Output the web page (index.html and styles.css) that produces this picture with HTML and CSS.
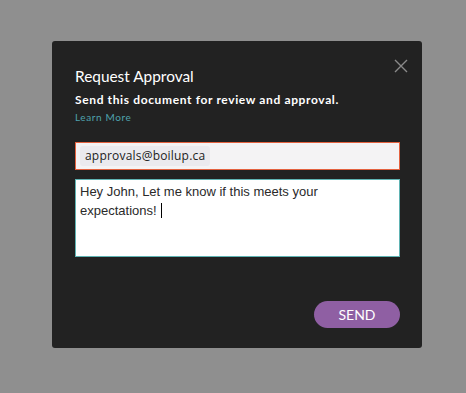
FILE: index.html
```html
<!DOCTYPE html>
<html>
<head>
<meta charset="utf-8">
<link rel="stylesheet" href="styles.css">
</head>
<body>
<div class="modal">
  <button class="close" aria-label="Close">
    <svg width="14" height="14" viewBox="0 0 14 14"><path d="M1 1L13 13M13 1L1 13" stroke="#8a8a8a" stroke-width="1.4" fill="none"/></svg>
  </button>
  <h1 class="title">Request Approval</h1>
  <p class="subtitle">Send this document for review and approval.</p>
  <a class="learn" href="#">Learn More</a>
  <div class="email-field"><span class="chip">approvals@boilup.ca</span></div>
  <div class="message">Hey John, Let me know if this meets your expectations!<span class="caret"></span></div>
  <div class="actions"><button class="send">SEND</button></div>
</div>
</body>
</html>
```
FILE: styles.css
```css
html, body { margin: 0; padding: 0; }
body {
  background: #8f8f8f;
  width: 466px;
  height: 393px;
  overflow: hidden;
  font-family: Lato, "Open Sans", sans-serif;
}
.modal {
  position: relative;
  box-sizing: border-box;
  margin: 41px 0 0 52px;
  width: 370px;
  height: 307px;
  background: #222222;
  border-radius: 3px;
  padding: 26px 22px 0 23px;
  display: flex;
  flex-direction: column;
}
.close {
  position: absolute;
  top: 18px;
  right: 14px;
  background: none;
  border: 0;
  padding: 0;
  width: 14px;
  height: 14px;
  display: flex;
}
.title {
  margin: 0;
  font-size: 15.4px;
  font-weight: 400;
  color: #ffffff;
  line-height: 19px;
}
.subtitle {
  margin: 6px 0 0;
  font-size: 12px;
  font-weight: 700;
  letter-spacing: 0.63px;
  color: #ffffff;
  line-height: 15px;
}
.learn {
  margin-top: 4px;
  font-size: 10px;
  letter-spacing: 0.6px;
  color: #4fa3ad;
  text-decoration: none;
  line-height: 13px;
  align-self: flex-start;
}
.email-field {
  margin-top: 18px;
  box-sizing: border-box;
  height: 28px;
  background: #f4f3f4;
  border: 1px solid #e4623f;
  display: flex;
  align-items: center;
  padding: 0 4px;
}
.chip {
  background: #ebeaee;
  border-radius: 3px;
  padding: 2px 5px;
  font-family: "Open Sans", sans-serif;
  font-size: 12px;
  letter-spacing: 0.2px;
  color: #222;
  line-height: 16px;
}
.message {
  margin-top: 9px;
  box-sizing: border-box;
  height: 78px;
  background: #ffffff;
  border: 1px solid #5fb3b3;
  padding: 2px 4px;
  font-family: "Liberation Sans", Arial, sans-serif;
  font-size: 13px;
  line-height: 19px;
  color: #2a2a2a;
  padding-right: 70px;
}
.caret {
  display: inline-block;
  width: 1px;
  height: 15px;
  background: #000;
  margin-left: 4px;
  vertical-align: -3px;
}
.actions {
  margin-top: 44px;
  display: flex;
  justify-content: flex-end;
}
.send {
  width: 86px;
  height: 27px;
  border: 0;
  border-radius: 14px;
  background: #8f5fa3;
  color: #ffffff;
  font-family: Lato, sans-serif;
  font-size: 14px;
  padding: 0;
}
```
